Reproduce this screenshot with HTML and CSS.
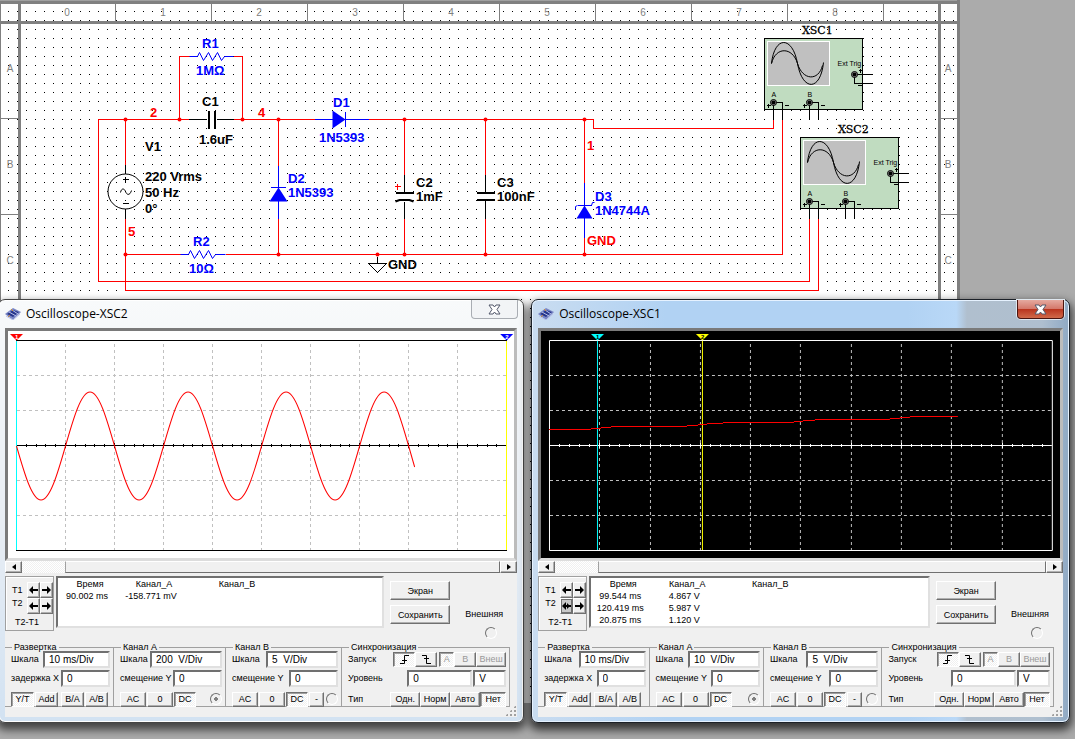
FILE: index.html
```html
<!DOCTYPE html>
<html lang="ru">
<head>
    <meta charset="UTF-8">
    <meta name="viewport" content="width=device-width, initial-scale=1.0">
    <title>Oscilloscope</title>
    <link rel="stylesheet" href="styles.css">
</head>
<body>
    <main class="desktop">
        <svg class="schematic" width="960" height="703" viewBox="0 0 960 703">
            <defs>
                <pattern id="dots" x="8" y="2" width="9" height="9" patternUnits="userSpaceOnUse">
                    <rect width="1" height="1" fill="#000"/>
                </pattern>
                <g id="terminal">
                    <circle r="3" fill="#999" stroke="#000"/>
                    <circle r="2" fill="#000"/>
                </g>
                <!-- oscilloscope block, placed twice -->
                <g id="scope">
                    <rect x="764" y="38" width="98" height="71" fill="#c0dcc0" stroke="#000" class="crisp"/>
                    <rect x="767" y="41" width="62" height="44" fill="#c0c0c0" stroke="#fff" class="crisp"/>
                    <g fill="none" stroke="#000">
                        <path d="M771 63C774 35 792 35 797 63S820 91 823 62"/>
                        <path d="M771 63C775 46 792 46 797 63S818 81 822 65"/>
                        <path class="crisp" d="M773 102V118M774 102H782V118M809 102V118M810 102H818V118M854 74H872M854 74V83H872"/>
                        <path class="crisp" d="M766 105H770M768 103V107M784 105H788M802 105H806M804 103V107M820 105H824M858 70H862M860 68V72M857 85H861"/>
                    </g>
                    <use href="#terminal" x="773" y="102"/>
                    <use href="#terminal" x="809" y="102"/>
                    <use href="#terminal" x="854" y="74"/>
                    <g class="pin-text">
                        <text x="837" y="65">Ext Trig</text>
                        <text x="771" y="96">A</text>
                        <text x="807" y="96">B</text>
                    </g>
                </g>
            </defs>

            <!-- sheet and rulers -->
            <rect width="960" height="703" fill="#fff"/>
            <rect width="960" height="703" fill="url(#dots)"/>
            <rect width="960" height="4" fill="#808080"/>
            <rect width="960" height="1" fill="#a0a0a0"/>
            <path fill="#808080" d="M0 4h1v699h-1zM0 21h957v3h-957zM18 4h3v699h-3zM938 4h3v699h-3zM957 0h3v703h-3z"/>
            <path class="crisp" stroke="#808080" d="M115.500 4v17M211.500 4v17M307.500 4v17M403.500 4v17M499.500 4v17M595.500 4v17M691.500 4v17M787.500 4v17M883.500 4v17M0 118.500h18M0 214.500h18M941 118.500h16M941 214.500h16"/>
            <g class="ruler">
                <text x="67" y="16">0</text>
                <text x="163" y="16">1</text>
                <text x="259" y="16">2</text>
                <text x="355" y="16">3</text>
                <text x="451" y="16">4</text>
                <text x="547" y="16">5</text>
                <text x="643" y="16">6</text>
                <text x="739" y="16">7</text>
                <text x="835" y="16">8</text>
                <text x="10" y="72">A</text>
                <text x="10" y="168">B</text>
                <text x="10" y="264">C</text>
                <text x="948" y="72">A</text>
                <text x="948" y="168">B</text>
                <text x="948" y="264">C</text>
            </g>

            <g transform="translate(.5 .5)">
                <use href="#scope"/>
                <use href="#scope" x="36" y="99"/>

                <!-- wires -->
                <g class="crisp" fill="none" stroke="#f00">
                    <path d="M188 119H98V281H809V218M125 119V164M125 218V290H818V218"/>
                    <path d="M125 254H180M225 254H782V119M179 119V56H189M233 56H242V119"/>
                    <path d="M233 119H314M368 119H593V128H773V119"/>
                    <path d="M278 119V165M278 218V254M404 119V174M404 218V254M485 119V174M485 218V254M584 119V182M584 237V254"/>
                    <path d="M394 186H400M397 183V189"/>
                </g>
                <g fill="#f00">
                    <circle cx="125" cy="119" r="2"/>
                    <circle cx="179" cy="119" r="2"/>
                    <circle cx="242" cy="119" r="2"/>
                    <circle cx="278" cy="119" r="2"/>
                    <circle cx="404" cy="119" r="2"/>
                    <circle cx="485" cy="119" r="2"/>
                    <circle cx="584" cy="119" r="2"/>
                    <circle cx="125" cy="254" r="2"/>
                    <circle cx="278" cy="254" r="2"/>
                    <circle cx="377" cy="254" r="2"/>
                    <circle cx="404" cy="254" r="2"/>
                    <circle cx="485" cy="254" r="2"/>
                    <circle cx="584" cy="254" r="2"/>
                </g>

                <!-- capacitors, source, ground -->
                <g class="crisp" fill="none" stroke="#000">
                    <path d="M188 119H206M216 119H233M125 164V173M125 209V218M122 179H128M125 176V182M122 203H128"/>
                    <path d="M404 174V192M404 201V218M485 174V192M485 200V218M377 256V263M368 263H386"/>
                </g>
                <path fill="none" stroke="#000" d="M368 263L377 272L386 263M120 192C121 187 124 188 125 191S129 196 131 190"/>
                <circle cx="125" cy="191" r="17.500" fill="none" stroke="#000"/>
                <path class="crisp" fill="#000" d="M207 110h2v18h-2zM213 110h2v18h-2zM395 191h18v2h-18zM476 191h18v2h-18zM476 198h18v2h-18z"/>
                <path fill="none" stroke="#000" stroke-width="2" d="M395 201L399 199.500H409L413 201"/>

                <!-- resistors and diodes -->
                <g fill="none" stroke="#00f">
                    <path d="M189 56H197L199 52L203 60L208 52L212 60L217 52L221 60L224 56H233"/>
                    <path d="M180 254H188L190 250L194 258L199 250L203 258L208 250L212 258L215 254H225"/>
                    <path class="crisp" d="M314 119H368M345 111V126M278 165V218M270 187H285M584 182V237M577 205H591"/>
                    <path d="M575 209V206L577 205M591 205L592 202H594"/>
                </g>
                <path fill="#00f" d="M332 110L345 119L332 128zM278 187L287 201H269zM584 205L592 218H576z"/>
            </g>

            <!-- labels -->
            <g class="part">
                <text x="145" y="151">V1</text>
                <text x="145" y="181">220 Vrms</text>
                <text x="145" y="197">50 Hz</text>
                <text x="145" y="213">0°</text>
                <text x="202" y="106">C1</text>
                <text x="199" y="144">1.6uF</text>
                <text x="416" y="187">C2</text>
                <text x="416" y="201">1mF</text>
                <text x="497" y="187">C3</text>
                <text x="497" y="201">100nF</text>
                <text x="388" y="269">GND</text>
            </g>
            <g class="part part-blue">
                <text x="202" y="48">R1</text>
                <text x="196" y="75">1MΩ</text>
                <text x="193" y="246">R2</text>
                <text x="189" y="273">10Ω</text>
                <text x="333" y="107">D1</text>
                <text x="319" y="142">1N5393</text>
                <text x="288" y="183">D2</text>
                <text x="288" y="197">1N5393</text>
                <text x="595" y="201">D3</text>
                <text x="595" y="215">1N4744A</text>
            </g>
            <g class="part part-red">
                <text x="150" y="117">2</text>
                <text x="258" y="117">4</text>
                <text x="128" y="236">5</text>
                <text x="587" y="150">1</text>
                <text x="587" y="245">GND</text>
            </g>
            <g class="scope-name">
                <text x="802" y="34">XSC1</text>
                <text x="838" y="133">XSC2</text>
            </g>
        </svg>

        <div class="windows">
            <section class="window window-2">
                <header class="titlebar">
                    <svg class="app-icon" width="16" height="12" viewBox="0 0 16 12">
                        <path d="M0 6L8 0L16 4L8 12z" fill="#7a86c4"/>
                        <path d="M2 6L8 2L14 4L8 9z" fill="#27368c"/>
                        <path d="M1 8L8 12L15 6M4 4L11 8M7 2L13 6" fill="none" stroke="#b9c2ea"/>
                        <path d="M6 1L8 3M3 9L5 7" stroke="#c98b3c"/>
                    </svg>
                    <h1>Oscilloscope-XSC2</h1>
                    <button class="close" aria-label="Close">
                        <svg width="13" height="11" viewBox="0 0 13 11"><path d="M1 1H5L6.500 3L8 1H12L9 5.500L12 10H8L6.500 8L5 10H1L4 5.500z" fill="#fff" stroke="#53586b"/></svg>
                    </button>
                </header>
                <div class="client">
                    <div class="plot">
                        <svg viewBox="0 0 506 227" preserveAspectRatio="none">
                            <g class="crisp" fill="none">
                                <path stroke="#c0c0c0" stroke-dasharray="3 3" d="M57.500 13V219M106.500 13V219M155.500 13V219M204.500 13V219M253.500 13V219M302.500 13V219M351.500 13V219M400.500 13V219M449.500 13V219M9 44.500H498M9 79.500H498M9 149.500H498M9 184.500H498"/>
                                <path stroke="#000" d="M8 9.500H499M8 114.500H499M8 219.500H499"/>
                                <path stroke="#000" stroke-width="3" stroke-dasharray="1 8.800" d="M8 114.500H499"/>
                                <path stroke="#000" stroke-width="5" stroke-dasharray="1 48" d="M8 114.500H499"/>
                                <path stroke="#0ff" d="M8.500 10V219"/>
                                <path stroke="#ff0" d="M498.500 10V219"/>
                            </g>
                            <path fill="none" stroke="#f00" d="M8.500 115c8 28 15.600 54 24.500 54s16.500-26 24.500-54s15.600-54 24.500-54s16.500 26 24.500 54s15.600 54 24.500 54s16.500-26 24.500-54s15.600-54 24.500-54s16.500 26 24.500 54s15.600 54 24.500 54s16.500-26 24.500-54s15.600-54 24.500-54s16.500 26 24.500 54s15.600 54 24.500 54s16.500-26 24.500-54s15.600-54 24.500-54s16.500 26 24.500 54l6 21"/>
                            <path fill="#f00" d="M2 3H15L8.500 9.500z"/>
                            <path fill="#00f" d="M492 3H505L498.500 9.500z"/>
                            <g class="cursor-text" fill="#fff">
                                <text x="7" y="8">1</text>
                                <text x="497" y="8">2</text>
                            </g>
                        </svg>
                    </div>
                    <div class="scrollbar">
                        <button class="btn" aria-label="Left"><svg width="4" height="6" viewBox="0 0 4 6"><path d="M4 0V6L0 3z"/></svg></button>
                        <span class="track dither"></span>
                        <span class="thumb"></span>
                        <button class="btn" aria-label="Right"><svg width="4" height="6" viewBox="0 0 4 6"><path d="M0 0V6L4 3z"/></svg></button>
                    </div>
                    <div class="readout">
                        <div class="cursors">
                            <span>T1</span>
                            <button class="btn" aria-label="T1 left"><svg width="9" height="8" viewBox="0 0 9 8"><path d="M0 4L4 0V3H9V5H4V8z"/></svg></button>
                            <button class="btn" aria-label="T1 right"><svg width="9" height="8" viewBox="0 0 9 8"><path d="M9 4L5 0V3H0V5H5V8z"/></svg></button>
                            <span class="second">T2</span>
                            <button class="btn" aria-label="T2 left"><svg width="9" height="8" viewBox="0 0 9 8"><path d="M0 4L4 0V3H9V5H4V8z"/></svg></button>
                            <button class="btn" aria-label="T2 right"><svg width="9" height="8" viewBox="0 0 9 8"><path d="M9 4L5 0V3H0V5H5V8z"/></svg></button>
                            <span class="diff">T2-T1</span>
                        </div>
                        <div class="values">
                            <table>
                                <tr><th>Время</th><th>Канал_A</th><th>Канал_B</th></tr>
                                <tr><td>90.002 ms</td><td>-158.771 mV</td><td></td></tr>
                            </table>
                        </div>
                        <div class="actions">
                            <button class="btn">Экран</button>
                            <button class="btn">Сохранить</button>
                        </div>
                        <label class="external">Внешняя <input type="radio" name="ext2"></label>
                    </div>
                    <div class="groups">
                        <fieldset>
                            <legend>Развертка</legend>
                            <div class="row"><label for="base2">Шкала</label><input class="scale" id="base2" value="10 ms/Div"></div>
                            <div class="row"><label for="delay2">задержка X</label><input id="delay2" value="0"></div>
                            <div class="row buttons">
                                <button class="btn pressed w23">Y/T</button><button class="btn w23">Add</button><button class="btn w23 apart">B/A</button><button class="btn w23">A/B</button>
                            </div>
                        </fieldset>
                        <fieldset>
                            <legend>Канал A</legend>
                            <div class="row"><label for="a2">Шкала</label><input class="scale wide" id="a2" value="200  V/Div"></div>
                            <div class="row"><label for="ay2">смещение Y</label><input id="ay2" value="0"></div>
                            <div class="row buttons">
                                <button class="btn w26">AC</button><button class="btn w26">0</button><button class="btn pressed w22">DC</button>
                                <input type="radio" name="trig2" aria-label="A" checked disabled>
                            </div>
                        </fieldset>
                        <fieldset>
                            <legend>Канал B</legend>
                            <div class="row"><label for="b2">Шкала</label><input class="scale wide" id="b2" value="5  V/Div"></div>
                            <div class="row"><label for="by2">смещение Y</label><input id="by2" value="0"></div>
                            <div class="row buttons">
                                <button class="btn w26">AC</button><button class="btn w26">0</button><button class="btn pressed w22">DC</button><button class="btn w15">-</button>
                                <input type="radio" name="trig2" aria-label="B">
                            </div>
                        </fieldset>
                        <fieldset class="sync">
                            <legend>Синхронизация</legend>
                            <div class="row"><span class="name">Запуск</span>
                                <button class="btn pressed w22" aria-label="Rising"><svg width="11" height="9" viewBox="0 0 11 9"><path d="M1 8.500H5.500V.5H10M3 5.500H8" fill="none" stroke="#000"/></svg></button><button class="btn w22" aria-label="Falling"><svg width="11" height="9" viewBox="0 0 11 9"><path d="M1 .5H5.500V8.500H10M3 3.500H8" fill="none" stroke="#000"/></svg></button><button class="btn pressed w15 apart" disabled>A</button><button class="btn w22" disabled>B</button><button class="btn w30" disabled>Внеш</button>
                            </div>
                            <div class="row"><label class="name" for="level2">Уровень</label><input class="level" id="level2" value="0"><input class="unit" aria-label="V" value="V"></div>
                            <div class="row"><span class="name">Тип</span>
                                <button class="btn w30">Одн.</button><button class="btn w30">Норм</button><button class="btn w30">Авто</button><button class="btn pressed w26">Нет</button>
                            </div>
                        </fieldset>
                    </div>
                    <span class="grip"></span>
                </div>
            </section>

            <section class="window window-1 active">
                <header class="titlebar">
                    <svg class="app-icon" width="16" height="12" viewBox="0 0 16 12">
                        <path d="M0 6L8 0L16 4L8 12z" fill="#7a86c4"/>
                        <path d="M2 6L8 2L14 4L8 9z" fill="#27368c"/>
                        <path d="M1 8L8 12L15 6M4 4L11 8M7 2L13 6" fill="none" stroke="#b9c2ea"/>
                        <path d="M6 1L8 3M3 9L5 7" stroke="#c98b3c"/>
                    </svg>
                    <h1>Oscilloscope-XSC1</h1>
                    <button class="close" aria-label="Close">
                        <svg width="13" height="11" viewBox="0 0 13 11"><path d="M1 1H5L6.500 3L8 1H12L9 5.500L12 10H8L6.500 8L5 10H1L4 5.500z" fill="#fff" stroke="#53586b"/></svg>
                    </button>
                </header>
                <div class="client">
                    <div class="plot plot-dark">
                        <svg viewBox="0 0 519 227" preserveAspectRatio="none">
                            <g class="crisp" fill="none">
                                <path stroke="#c0c0c0" stroke-dasharray="3 3" d="M58.500 13V219M109.500 13V219M159.500 13V219M209.500 13V219M259.500 13V219M310.500 13V219M360.500 13V219M410.500 13V219M461.500 13V219M9 44.500H511M9 79.500H511M9 149.500H511M9 184.500H511"/>
                                <path stroke="#fff" d="M8.500 9.500H511.500V219.500H8.500zM8 114.500H511"/>
                                <path stroke="#fff" stroke-width="3" stroke-dasharray="1 9.060" d="M8 114.500H511"/>
                                <path stroke="#fff" stroke-width="5" stroke-dasharray="1 49.300" d="M8 114.500H511"/>
                                <path stroke="#0ff" d="M56.500 10V219"/>
                                <path stroke="#ff0" d="M161.500 10V219"/>
                                <path stroke="#f00" d="M8 98.500H50M50 97.500H60M60 96.500H70M70 95.500H146M146 94.500H157M157 93.500H166M166 92.500H182M182 91.500H253M253 90.500H262M262 89.500H274M274 88.500H349M349 87.500H359M359 86.500H369M369 85.500H417"/>
                            </g>
                            <path fill="#0ff" d="M50 3H63L56.500 9.500z"/>
                            <path fill="#ff0" d="M155 3H168L161.500 9.500z"/>
                            <g class="cursor-text" fill="#000">
                                <text x="55" y="8">1</text>
                                <text x="160" y="8">2</text>
                            </g>
                        </svg>
                    </div>
                    <div class="scrollbar">
                        <button class="btn" aria-label="Left"><svg width="4" height="6" viewBox="0 0 4 6"><path d="M4 0V6L0 3z"/></svg></button>
                        <span class="track dither"></span>
                        <span class="thumb"></span>
                        <button class="btn" aria-label="Right"><svg width="4" height="6" viewBox="0 0 4 6"><path d="M0 0V6L4 3z"/></svg></button>
                    </div>
                    <div class="readout">
                        <div class="cursors">
                            <span>T1</span>
                            <button class="btn" aria-label="T1 left"><svg width="9" height="8" viewBox="0 0 9 8"><path d="M0 4L4 0V3H9V5H4V8z"/></svg></button>
                            <button class="btn" aria-label="T1 right"><svg width="9" height="8" viewBox="0 0 9 8"><path d="M9 4L5 0V3H0V5H5V8z"/></svg></button>
                            <span class="second">T2</span>
                            <button class="btn focused" aria-label="T2 left"><svg width="9" height="8" viewBox="0 0 9 8"><path d="M0 4L4 0V3H9V5H4V8z"/><path d="M5 1L8 4L5 7z"/></svg></button>
                            <button class="btn" aria-label="T2 right"><svg width="9" height="8" viewBox="0 0 9 8"><path d="M9 4L5 0V3H0V5H5V8z"/></svg></button>
                            <span class="diff">T2-T1</span>
                        </div>
                        <div class="values">
                            <table>
                                <tr><th>Время</th><th>Канал_A</th><th>Канал_B</th></tr>
                                <tr><td>99.544 ms</td><td>4.867 V</td><td></td></tr>
                                <tr><td>120.419 ms</td><td>5.987 V</td><td></td></tr>
                                <tr><td>20.875 ms</td><td>1.120 V</td><td></td></tr>
                            </table>
                        </div>
                        <div class="actions">
                            <button class="btn">Экран</button>
                            <button class="btn">Сохранить</button>
                        </div>
                        <label class="external">Внешняя <input type="radio" name="ext1"></label>
                    </div>
                    <div class="groups">
                        <fieldset>
                            <legend>Развертка</legend>
                            <div class="row"><label for="base1">Шкала</label><input class="scale" id="base1" value="10 ms/Div"></div>
                            <div class="row"><label for="delay1">задержка X</label><input id="delay1" value="0"></div>
                            <div class="row buttons">
                                <button class="btn pressed w23">Y/T</button><button class="btn w23">Add</button><button class="btn w23 apart">B/A</button><button class="btn w23">A/B</button>
                            </div>
                        </fieldset>
                        <fieldset>
                            <legend>Канал A</legend>
                            <div class="row"><label for="a1">Шкала</label><input class="scale wide" id="a1" value="10  V/Div"></div>
                            <div class="row"><label for="ay1">смещение Y</label><input id="ay1" value="0"></div>
                            <div class="row buttons">
                                <button class="btn w26">AC</button><button class="btn w26">0</button><button class="btn pressed w22">DC</button>
                                <input type="radio" name="trig1" aria-label="A" checked disabled>
                            </div>
                        </fieldset>
                        <fieldset>
                            <legend>Канал B</legend>
                            <div class="row"><label for="b1">Шкала</label><input class="scale wide" id="b1" value="5  V/Div"></div>
                            <div class="row"><label for="by1">смещение Y</label><input id="by1" value="0"></div>
                            <div class="row buttons">
                                <button class="btn w26">AC</button><button class="btn w26">0</button><button class="btn pressed w22">DC</button><button class="btn w15">-</button>
                                <input type="radio" name="trig1" aria-label="B">
                            </div>
                        </fieldset>
                        <fieldset class="sync">
                            <legend>Синхронизация</legend>
                            <div class="row"><span class="name">Запуск</span>
                                <button class="btn pressed w22" aria-label="Rising"><svg width="11" height="9" viewBox="0 0 11 9"><path d="M1 8.500H5.500V.5H10M3 5.500H8" fill="none" stroke="#000"/></svg></button><button class="btn w22" aria-label="Falling"><svg width="11" height="9" viewBox="0 0 11 9"><path d="M1 .5H5.500V8.500H10M3 3.500H8" fill="none" stroke="#000"/></svg></button><button class="btn pressed w15 apart" disabled>A</button><button class="btn w22" disabled>B</button><button class="btn w30" disabled>Внеш</button>
                            </div>
                            <div class="row"><label class="name" for="level1">Уровень</label><input class="level" id="level1" value="0"><input class="unit" aria-label="V" value="V"></div>
                            <div class="row"><span class="name">Тип</span>
                                <button class="btn w30">Одн.</button><button class="btn w30">Норм</button><button class="btn w30">Авто</button><button class="btn pressed w26">Нет</button>
                            </div>
                        </fieldset>
                    </div>
                    <span class="grip"></span>
                </div>
            </section>
        </div>
    </main>
</body>
</html>
```

FILE: styles.css
```css
* {
    box-sizing: border-box;
}

body {
    margin: 0;
    font-family: "Liberation Sans", Arial, sans-serif;
    font-size: 9px;
    color: #000;
    background: #ababab;
}

.desktop {
    position: relative;
    min-height: 100vh;
    overflow: hidden;
}

.schematic {
    display: block;
}

.crisp {
    shape-rendering: crispEdges;
}

.ruler {
    font-size: 10px;
    fill: #808080;
    text-anchor: middle;
}

.part {
    font-size: 13px;
    font-weight: bold;
}

.part-blue {
    fill: #00f;
}

.part-red {
    fill: #f00;
}

.scope-name {
    font-family: "DejaVu Serif", serif;
    font-size: 11px;
    stroke: #000;
    stroke-width: .3px;
}

.pin-text {
    font-size: 7px;
}

/* windows lie over the sheet */
.windows {
    position: absolute;
    top: 299px;
    left: -2px;
    right: 5px;
    display: flex;
    gap: 7px;
}

.window {
    flex: 526 1 0;
    min-width: 0;
    padding: 0 6px 5px;
    border: 1px solid #444;
    border-radius: 7px;
    background: linear-gradient(#f8fafb, #e9eef4 50%, #d2e2f2);
    box-shadow: inset 0 0 0 1px #fff, 0 5px 9px 2px rgba(0, 0, 0, 0.6);
}

.window.active {
    flex-grow: 539;
    border-color: #1c2128;
    background: linear-gradient(90deg, #c9dcf0, #b1d2f3 25%, #b1d2f3 70%, #b9d8f7 79%, #b0bfce 81%, #afbfcf 95%, #8fa9c4);
    box-shadow: inset 0 0 0 1px #e6f2ff, 0 5px 10px 2px rgba(0, 0, 0, 0.7);
}

.titlebar {
    display: flex;
    align-items: center;
    gap: 5px;
    height: 28px;
}

.titlebar h1 {
    flex: 1;
    margin: 0;
    font-family: "Open Sans", "Noto Sans", sans-serif;
    font-size: 12px;
    font-weight: normal;
    line-height: 16px;
}

.close {
    display: flex;
    align-items: center;
    justify-content: center;
    align-self: flex-start;
    width: 47px;
    height: 19px;
    margin-right: -1px;
    padding: 0;
    border: 1px solid #a9adb3;
    border-top: 0;
    border-radius: 0 0 4px 4px;
    background: #f2f4f6;
}

.active .close {
    border-color: #4a1510;
    background: linear-gradient(#e5a99f, #d4796b 48%, #b9331d 50%, #d06a4a);
    box-shadow: 0 0 0 1px #dfe8f0;
}

.client {
    position: relative;
    padding-bottom: 10px;
    background: #f0f0f0;
}

.plot {
    height: 233px;
    border: 3px solid;
    border-color: #7a7a7a #bcbcbc #dcdcdc #7a7a7a;
    background: #fff;
}

.plot-dark {
    background: #000;
}

.plot svg {
    display: block;
    width: 100%;
    height: 100%;
}

.cursor-text {
    font-size: 6px;
    font-weight: bold;
}

.btn {
    display: flex;
    align-items: center;
    justify-content: center;
    flex: none;
    padding: 0;
    border: 1px solid;
    border-color: #fff #707070 #707070 #fff;
    box-shadow: inset -1px -1px #b0b0b0;
    background: #f0f0f0;
    font: inherit;
    color: #000;
    line-height: 10px;
}

.btn:disabled {
    color: #999;
}

.btn.pressed {
    border-color: #707070 #fff #fff #707070;
    box-shadow: inset 1px 1px #a0a0a0;
}

.btn.pressed,
.dither {
    background: repeating-conic-gradient(#f0f0f0 0 25%, #fff 0 50%) 0 0 / 2px 2px;
}

.focused {
    outline: 1px solid #707070;
    outline-offset: -2px;
    background: #c8c8c8;
}

.scrollbar {
    display: flex;
    height: 12px;
}

.scrollbar .btn {
    width: 17px;
}

.track {
    width: 43px;
}

.thumb {
    flex: 1;
    border: 1px solid;
    border-color: #fff #707070 #707070 #a0a0a0;
}

.readout {
    display: flex;
    align-items: flex-start;
    height: 55px;
    margin-top: 3px;
}

.cursors {
    display: grid;
    grid-template-columns: 15px 13px 13px;
    grid-auto-rows: 16px;
    align-items: center;
    width: 49px;
    height: 55px;
    padding: 5px 0 0 6px;
    border: 1px solid #a0a0a0;
    box-shadow: inset 1px 1px #fff;
}

.cursors .btn {
    height: 16px;
}

.cursors .second {
    align-self: start;
}

.cursors .diff {
    grid-column: 1 / 4;
    padding-left: 3px;
}

.values {
    flex: 1;
    height: 52px;
    margin-left: 2px;
    border: 2px solid;
    border-color: #707070 #e0e0e0 #e0e0e0 #707070;
    background: #fff;
}

.values table {
    border-collapse: collapse;
    table-layout: fixed;
    width: 230px;
}

.values th,
.values td {
    width: 64px;
    height: 12px;
    padding: 0;
    font-weight: normal;
    line-height: 12px;
    text-align: center;
    white-space: nowrap;
}

.values td {
    padding-right: 6px;
}

.values th:last-child {
    width: 102px;
}

.actions {
    display: flex;
    flex-direction: column;
    gap: 5px;
    width: 60px;
    margin: 5px 0 0 6px;
}

.actions .btn {
    height: 19px;
}

.external {
    display: flex;
    flex-direction: column;
    align-items: flex-end;
    gap: 7px;
    margin: 32px 14px 0 15px;
    line-height: 12px;
}

.external input {
    margin-right: 6px;
}

input[type="radio"] {
    appearance: none;
    flex: none;
    width: 12px;
    height: 12px;
    margin-top: 0;
    margin-bottom: 0;
    border: 1px solid;
    border-color: #707070 #fff #fff #707070;
    border-radius: 50%;
}

input[type="radio"]:checked {
    background: radial-gradient(#808080 0 2px, transparent 2px);
}

.groups {
    display: grid;
    grid-template-columns: 109fr 112fr 116fr 168fr;
    margin: 12px 7px 0 0;
}

.active .groups {
    margin-right: 9px;
}

fieldset {
    min-width: 0;
    margin: 0;
    padding: 0 3px 0 6px;
    border: solid #a0a0a0;
    border-width: 1px 1px 1px 0;
}

legend {
    margin-left: 1px;
    padding: 0 2px;
    line-height: 8px;
}

.row {
    display: flex;
    align-items: center;
    justify-content: space-between;
    height: 16px;
    margin-bottom: 3px;
    white-space: nowrap;
}

.row:last-child {
    height: 14px;
    margin: 6px 0 0;
}

.row input:not([type]) {
    width: 49px;
    height: 17px;
    padding: 0 0 0 4px;
    border: 2px solid;
    border-color: #707070 #e0e0e0 #e0e0e0 #707070;
    background: #fff;
    font: inherit;
    font-size: 10px;
}

.row input.scale:not([type]) {
    width: 67px;
}

.row input.wide:not([type]) {
    width: 72px;
}

.row .btn {
    height: 15px;
}

.row.buttons {
    justify-content: flex-start;
    gap: 1px;
}

.buttons .apart {
    margin-left: 2px;
}

.buttons input[type="radio"] {
    margin: 0 0 0 auto;
}

.sync .row {
    justify-content: flex-start;
}

.name {
    margin-right: auto;
}

.sync .apart {
    margin-left: 2px;
}

.row input.level:not([type]) {
    width: 65px;
}

.row input.unit:not([type]) {
    width: 33px;
    margin-left: 1px;
}

.w15 {
    width: 15px;
}

.w22 {
    width: 22px;
}

.w23 {
    width: 23px;
}

.w26 {
    width: 26px;
}

.w30 {
    width: 30px;
}

.grip {
    position: absolute;
    right: 1px;
    bottom: 1px;
    width: 11px;
    height: 11px;
    background: radial-gradient(#a0a0a0 1px, transparent 1px) 0 0 / 4px 4px;
    clip-path: polygon(100% 0, 100% 100%, 0 100%);
}
```
